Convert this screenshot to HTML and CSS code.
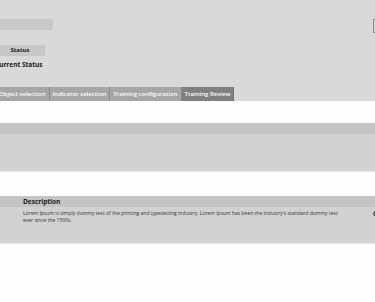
FILE: index.html
```html
<!DOCTYPE html>
<html lang="en">
<head>
<meta charset="UTF-8">
<meta name="viewport" content="width=device-width, initial-scale=1.0">
<title>Training Review</title>
<link rel="stylesheet" href="styles.css">
</head>
<body>
<div class="top">
    <div class="head-row">
        <div class="title-bar"></div>
        <div class="action-box"></div>
    </div>
    <div class="status-label">Status</div>
    <div class="status-value">Current Status</div>
    <div class="tabs">
        <div class="tab">Object selection</div>
        <div class="tab">Indicator selection</div>
        <div class="tab">Training configuration</div>
        <div class="tab active">Training Review</div>
    </div>
</div>

<section class="panel">
    <div class="panel-head"></div>
    <div class="panel-body"></div>
</section>

<section class="panel desc">
    <div class="panel-head">
        <span class="desc-title">Description</span>
    </div>
    <div class="panel-body desc-body">
        <p class="desc-text">Lorem Ipsum is simply dummy text of the printing and typesetting industry. Lorem Ipsum has been the industry's standard dummy text ever since the 1500s.</p>
        <span class="desc-side">Created</span>
    </div>
</section>
</body>
</html>
```

FILE: styles.css
```css
body {
    margin: 0;
    background-color: #fefefe;
    font-family: "Open Sans", sans-serif;
    overflow: hidden;
    width: 375px;
    height: 302px;
}
.top {
    background-color: #d9d9d9;
    height: 101px;
    padding-top: 19px;
    box-sizing: border-box;
    margin-left: -5px;
}
.head-row {
    display: flex;
    justify-content: space-between;
    width: 390px;
}
.title-bar {
    width: 58px;
    height: 11px;
    background-color: #c8c8c8;
}
.action-box {
    width: 10px;
    height: 12px;
    border: 1px solid #8a8a8a;
    background-color: #dcdcdc;
}
.status-label {
    width: 50px;
    height: 11px;
    margin-top: 12px;
    background-color: #c7c7c7;
    font-size: 6px;
    font-weight: 700;
    line-height: 11px;
    text-align: center;
    color: #1a1a1a;
}
.status-value {
    margin-top: 4px;
    font-size: 6.5px;
    font-weight: 700;
    line-height: 9px;
    color: #1a1a1a;
}
.tabs {
    display: flex;
    margin-left: 1px;
    margin-top: 18px;
}
.tab {
    height: 14px;
    padding: 0 3px;
    background-color: #a6a6a6;
    border-right: 1px solid #8b8b8b;
    color: #ffffff;
    font-size: 6px;
    font-weight: 600;
    line-height: 14px;
    white-space: nowrap;
}
.tab.active {
    background-color: #808080;
    border-right-color: #707070;
}
.panel {
    margin-top: 22px;
    border-bottom: 1px solid #e8e8e8;
}
.panel-head {
    height: 11px;
    background-color: #c4c4c4;
}
.panel-body {
    height: 37px;
    background-color: #d1d1d1;
}
.desc {
    margin-top: 24px;
}
.desc-title {
    display: block;
    padding-left: 23px;
    font-size: 6.5px;
    font-weight: 700;
    line-height: 11px;
    color: #1a1a1a;
}
.desc-body {
    display: flex;
    height: 36px;
    width: 400px;
}
.desc-text {
    flex: 0 0 316px;
    margin: 3px 34px 0 23px;
    font-size: 5px;
    line-height: 7px;
    color: #333333;
}
.desc-side {
    margin-top: 3px;
    font-size: 6.5px;
    font-weight: 700;
    line-height: 7px;
    color: #1a1a1a;
}
```
